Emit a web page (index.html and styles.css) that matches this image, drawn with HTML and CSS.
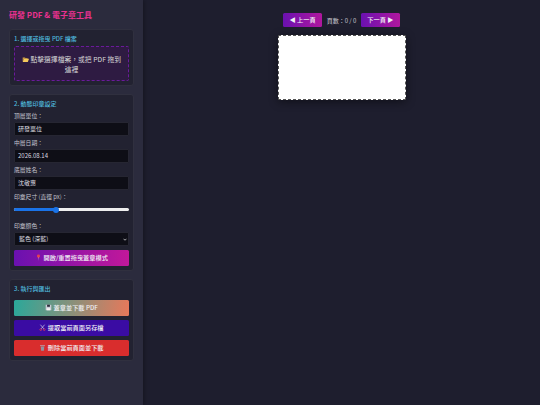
FILE: index.html
```html
<!DOCTYPE html>
<html lang="zh-Hant">
<head>
<meta charset="utf-8">
<title>研發 PDF &amp; 電子章工具</title>
<link rel="stylesheet" href="styles.css">
</head>
<body>
<div class="app">
  <aside class="sidebar">
    <h1 class="title">研發 PDF &amp; 電子章工具</h1>
    <section class="panel">
      <h2 class="panel-title">1. 選擇或拖曳 PDF 檔案</h2>
      <div class="drop">
        <svg class="ico" viewBox="0 0 10 10"><path d="M1 2h3l1 1h3v1H2.500L1 8z" fill="#d9a441"/><path d="M2.500 4H10L8.300 8.500H1z" fill="#f5c95c"/></svg>
        點擊選擇檔案，或把 PDF 拖到這裡
      </div>
    </section>
    <section class="panel">
      <h2 class="panel-title">2. 動態印章設定</h2>
      <label class="lbl lbl-first">頂層單位：</label>
      <div class="field">研發單位</div>
      <label class="lbl">中層日期：</label>
      <div class="field">2026.08.14</div>
      <label class="lbl">底層姓名：</label>
      <div class="field">沈敬惠</div>
      <label class="lbl">印章尺寸 (直徑 px)：</label>
      <div class="slider"><div class="slider-fill"></div><div class="slider-knob"></div></div>
      <label class="lbl">印章顏色：</label>
      <div class="field field-select">
        <span>藍色 (深藍)</span>
        <svg class="chev" viewBox="0 0 8 5"><path d="M1 1l3 3 3-3" fill="none" stroke="#fff" stroke-width="1.300"/></svg>
      </div>
      <button class="btn btn-purple">
        <svg class="ico" viewBox="0 0 10 10"><circle cx="5" cy="3" r="2.200" fill="#e8414f"/><path d="M4.600 4.500h.8L5 10z" fill="#bbb"/></svg>
        開啟/重置拖曳蓋章模式
      </button>
    </section>
    <section class="panel">
      <h2 class="panel-title">3. 執行與匯出</h2>
      <div class="actions">
        <button class="btn btn-green">
          <svg class="ico" viewBox="0 0 10 10"><path d="M1 1h7l1 1v7H1z" fill="#c9ccd6"/><path d="M3 1h4v3H3z" fill="#2c2c3c"/><path d="M2.500 6h5v3h-5z" fill="#f2f2f2"/></svg>
          蓋章並下載 PDF
        </button>
        <button class="btn btn-indigo">
          <svg class="ico" viewBox="0 0 10 10"><path d="M2 1l5 6M8 1L3 7" stroke="#cfd3e6" stroke-width="1" fill="none"/><circle cx="2.500" cy="8" r="1.300" fill="none" stroke="#e0405a"/><circle cx="7.500" cy="8" r="1.300" fill="none" stroke="#e0405a"/></svg>
          提取當前頁面另存檔
        </button>
        <button class="btn btn-red">
          <svg class="ico" viewBox="0 0 10 10"><path d="M1.500 2h7v1h-7z" fill="#b8bcc6"/><path d="M2.500 3.500h5L7 9.500H3z" fill="#8f94a0"/></svg>
          刪除當前頁面並下載
        </button>
      </div>
    </section>
  </aside>
  <main class="main">
    <div class="pager">
      <button class="btn btn-page">◀ 上一頁</button>
      <span class="page-info">頁數：0 / 0</span>
      <button class="btn btn-page">下一頁 ▶</button>
    </div>
    <div class="canvas"></div>
  </main>
</div>
</body>
</html>
```
FILE: styles.css
```css
* { box-sizing: border-box; margin: 0; padding: 0; }
html, body { width: 540px; height: 405px; overflow: hidden; background: #1e1e2e; }
body { font-family: "Noto Sans CJK TC", "Noto Sans", sans-serif; color: #e0e0e0; }
.app { display: flex; width: 540px; height: 405px; }
.sidebar {
  width: 143px; flex: none; background: #2b2b3d; padding: 9px 9px 0;
  box-shadow: 1px 0 5px rgba(0,0,0,.35);
}
.title { font-size: 8px; line-height: 12px; font-weight: 700; color: #e8318f; margin-bottom: 8px; }
.panel {
  background: #222231; border: 1px solid #30303f; border-radius: 3px;
  padding: 5px 4px 4px; margin-bottom: 8px; width: 125px;
}
.panel-title { font-size: 6px; line-height: 8px; font-weight: 500; color: #4fb8de; margin-bottom: 3px; }
.drop {
  height: 35px; border: 1px dashed #6a1b9a; border-radius: 2px; background: #2e1b42;
  font-size: 6.800px; line-height: 10px; color: #d8d8d8; text-align: center; padding: 7px 4px 0;
}
.ico { width: 7px; height: 7px; vertical-align: -1px; }
.lbl { display: block; font-size: 5.800px; line-height: 8px; color: #c4c4ce; margin: 0 0 2px; }
.lbl-first { margin-top: 4px; }
.field {
  height: 14px; background: #0e0e16; border: 1px solid #262632; border-radius: 1px;
  font-size: 6px; line-height: 12px; color: #dcdce0; padding: 0 3px; margin-bottom: 3px;
}
.field-select { display: flex; justify-content: space-between; align-items: center; padding: 0 1px 0 4px; margin-bottom: 4px; }
.chev { width: 4px; height: 3px; }
.slider { position: relative; height: 3px; margin: 7px 0 11px; background: #eeeeee; border-radius: 1.500px; }
.slider-fill { width: 41px; height: 3px; background: #1a73e8; border-radius: 1.500px; }
.slider-knob { position: absolute; left: 39px; top: -1.500px; width: 6px; height: 6px; border-radius: 50%; background: #1a73e8; }
.btn {
  display: block; width: 100%; height: 16px; border: 0; border-radius: 1.500px; color: #f0f0f4;
  font-family: inherit; font-weight: 500; font-size: 6.200px; line-height: 8px; text-align: center;
}
.btn-purple { background: linear-gradient(90deg, #6a11b0, #c2189a); }
.actions { display: flex; flex-direction: column; gap: 4px; margin-top: 7px; }
.btn-green { background: linear-gradient(100deg, #2aa89a, #e8785a); }
.btn-indigo { background: #3a0ca3; }
.btn-red { background: #d92d2d; }
.main { flex: 1; display: flex; flex-direction: column; align-items: center; padding-top: 13px; }
.pager { display: flex; align-items: center; gap: 5px; height: 14px; }
.btn-page { width: auto; height: 14px; padding: 0 6px; background: linear-gradient(90deg, #6a11b0, #b0179e); }
.page-info { font-size: 6px; color: #c8c8d0; }
.canvas {
  width: 128px; height: 65px; margin-top: 8px; background: #fff;
  border: 1px dashed #555; border-radius: 1px; box-shadow: 0 2px 10px rgba(0,0,0,.45);
}
```
